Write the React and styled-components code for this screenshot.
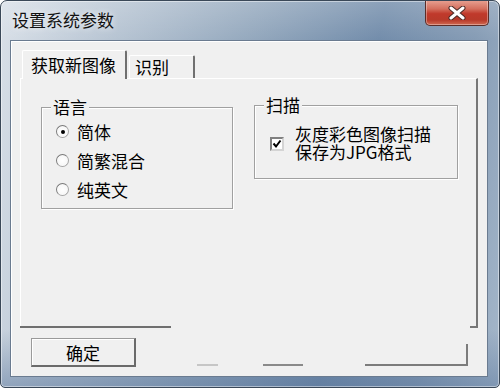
import React from 'react'
import styled, {createGlobalStyle} from 'styled-components'

const GlobalStyle = createGlobalStyle`
  html, body {
    margin: 0;
    padding: 0;
    background: #ffffff;
  }
  body {
    font-family: "Noto Sans CJK SC", "Liberation Sans", sans-serif;
    color: #000;
  }
`

const Window = styled.div`
  width: 500px;
  height: 388px;
  box-sizing: border-box;
  display: flex;
  flex-direction: column;
  border: 1px solid #3a4858;
  border-radius: 7px 7px 5px 5px;
  background:
    linear-gradient(180deg, rgba(255, 255, 255, 0.18) 0%, rgba(255, 255, 255, 0) 10%, rgba(80, 110, 150, 0) 85%, rgba(80, 110, 150, 0.45) 100%),
    linear-gradient(100deg, #d9e0e8 0%, #b9c6d4 20%, #95a9be 45%, #738dab 68%, #869cb5 85%, #a6b8cb 100%);
  box-shadow: inset 0 0 0 1px rgba(255, 255, 255, 0.45);
  overflow: hidden;
`

const TitleBar = styled.div`
  height: 39px;
  display: flex;
  justify-content: space-between;
  align-items: flex-start;
  flex-shrink: 0;
`

const Title = styled.div`
  margin: 9px 0 0 11px;
  font-size: 17px;
  line-height: 20px;
  color: #111;
  text-shadow: 0 0 6px rgba(255, 255, 255, 0.9);
`

const CloseButton = styled.div`
  width: 64px;
  height: 26px;
  margin: -1px 10px 0 0;
  box-sizing: border-box;
  display: flex;
  align-items: center;
  justify-content: center;
  border: 1px solid #5b2d28;
  border-top: none;
  border-radius: 0 0 5px 5px;
  background: linear-gradient(180deg, #e8a394 0%, #d4705f 35%, #c0392b 55%, #b83a2a 80%, #d06a52 100%);
  box-shadow: inset 0 0 0 1px rgba(255, 255, 255, 0.35);
`

const Client = styled.div`
  flex: 1;
  margin: 0 11px 10px 9px;
  box-sizing: border-box;
  border: 1px solid #6a7b90;
  background: #f0f0f0;
  box-shadow: inset 1px 1px 0 #ffffff;
  padding: 9px 9px 0 9px;
  display: flex;
  flex-direction: column;
`

const TabStrip = styled.div`
  height: 28px;
  display: flex;
  align-items: flex-end;
  padding-left: 2px;
  position: relative;
  z-index: 1;
`

const Tab = styled.div`
  box-sizing: border-box;
  height: ${p => (p.$active ? '29px' : '23px')};
  margin-bottom: ${p => (p.$active ? '-1px' : '0')};
  padding: ${p => (p.$active ? '3px 9px 0 8px' : '0 24px 0 5px')};
  margin-left: ${p => (p.$active ? '0' : '2px')};
  font-size: 17px;
  line-height: 22px;
  background: #f0f0f0;
  border-top: 1px solid #ffffff;
  border-left: 1px solid #ffffff;
  border-right: 2px solid #707070;
  border-radius: 2px 2px 0 0;
`

const Panel = styled.div`
  position: relative;
  height: 250px;
  box-sizing: border-box;
  border-top: 1px solid #ffffff;
  border-left: 1px solid #ffffff;
  border-right: 2px solid #777777;
  display: flex;
  align-items: flex-start;
  gap: 21px;
  padding: 26px 0 0 20px;

  &::after {
    content: '';
    position: absolute;
    left: -1px;
    right: -2px;
    bottom: 0;
    height: 2px;
    background: linear-gradient(
      90deg,
      #6f6f6f 0,
      #6f6f6f 151px,
      transparent 151px,
      transparent 450px,
      #777777 450px
    );
  }
`

const GroupBox = styled.div`
  position: relative;
  box-sizing: border-box;
  width: ${p => p.$width}px;
  height: ${p => p.$height}px;
  margin-top: ${p => p.$top || 0}px;
  border: 1px solid #a0a0a0;
  box-shadow: inset 1px 1px 0 #ffffff, 1px 1px 0 #ffffff;
  padding: ${p => p.$pad};
`

const GroupTitle = styled.div`
  position: absolute;
  top: -11px;
  left: 9px;
  padding: 0 2px;
  font-size: 17px;
  line-height: 20px;
  background: #f0f0f0;
`

const RadioRow = styled.label`
  height: 29px;
  display: flex;
  align-items: center;
  gap: 8px;
  font-size: 17px;
  line-height: 20px;
`

const RadioDot = styled.span`
  width: 13px;
  height: 13px;
  box-sizing: border-box;
  border-radius: 50%;
  border: 1px solid #a5a5a5;
  border-top-color: #7a7a7a;
  border-left-color: #7a7a7a;
  background: radial-gradient(circle, #ffffff 0%, #f4f4f4 100%);
  display: flex;
  align-items: center;
  justify-content: center;
  flex-shrink: 0;

  &::after {
    content: '';
    width: 4px;
    height: 4px;
    border-radius: 50%;
    background: ${p => (p.$checked ? '#000' : 'transparent')};
  }
`

const CheckRow = styled.label`
  display: flex;
  align-items: center;
  gap: 11px;
  font-size: 17px;
  line-height: 18px;
`

const CheckBox = styled.span`
  width: 14px;
  height: 14px;
  box-sizing: border-box;
  border: 2px solid #808080;
  border-right-color: #d4d4d4;
  border-bottom-color: #d4d4d4;
  background: #ffffff;
  display: flex;
  align-items: center;
  justify-content: center;
  flex-shrink: 0;
  margin-top: 2px;
`

const Footer = styled.div`
  display: flex;
  align-items: flex-end;
  margin-top: 10px;
  padding-left: 11px;
  height: 29px;
`

const Button = styled.div`
  width: 105px;
  height: 29px;
  box-sizing: border-box;
  display: flex;
  align-items: center;
  justify-content: center;
  font-size: 17px;
  background: #f0f0f0;
  border: 1px solid #9a9a9a;
  border-right: 2px solid #6a6a6a;
  border-bottom: 2px solid #6a6a6a;
  box-shadow: inset 1px 1px 0 #ffffff;
`

const Ghost = styled.div`
  width: ${p => p.$width}px;
  height: ${p => p.$height || 2}px;
  margin-left: ${p => p.$gap}px;
  margin-bottom: 1px;
  box-sizing: border-box;
  border-bottom: 2px solid ${p => p.$color};
  border-right: ${p => (p.$edge ? `2px solid ${p.$color}` : 'none')};
`

const CloseIcon = () => (
  <svg width="18" height="14" viewBox="0 0 18 14">
    <path
      d="M3 2 L15 12 M15 2 L3 12"
      stroke="#4a2a26"
      strokeWidth="5"
      strokeLinecap="round"
    />
    <path
      d="M3 2 L15 12 M15 2 L3 12"
      stroke="#ffffff"
      strokeWidth="3"
      strokeLinecap="round"
    />
  </svg>
)

const CheckMark = () => (
  <svg width="10" height="10" viewBox="0 0 10 10">
    <path d="M1.5 4.5 L4 7.5 L8.5 1.5" stroke="#000" strokeWidth="2" fill="none" />
  </svg>
)

const languages = [
  {label: '简体', checked: true},
  {label: '简繁混合', checked: false},
  {label: '纯英文', checked: false},
]

const App = () => (
  <>
    <GlobalStyle />
    <Window>
      <TitleBar>
        <Title>设置系统参数</Title>
        <CloseButton>
          <CloseIcon />
        </CloseButton>
      </TitleBar>
      <Client>
        <TabStrip>
          <Tab $active>获取新图像</Tab>
          <Tab>识别</Tab>
        </TabStrip>
        <Panel>
          <GroupBox $width={192} $height={102} $top={2} $pad="9px 0 0 14px">
            <GroupTitle>语言</GroupTitle>
            {languages.map(item => (
              <RadioRow key={item.label}>
                <RadioDot $checked={item.checked} />
                {item.label}
              </RadioRow>
            ))}
          </GroupBox>
          <GroupBox $width={204} $height={74} $pad="19px 0 0 15px">
            <GroupTitle>扫描</GroupTitle>
            <CheckRow>
              <CheckBox>
                <CheckMark />
              </CheckBox>
              <span>
                灰度彩色图像扫描
                <br />
                保存为JPG格式
              </span>
            </CheckRow>
          </GroupBox>
        </Panel>
        <Footer>
          <Button>确定</Button>
          <Ghost $width={21} $gap={61} $color="#c6c6c6" />
          <Ghost $width={40} $gap={45} $color="#8a8a8a" />
          <Ghost $width={103} $height={22} $gap={62} $color="#7c7c7c" $edge />
        </Footer>
      </Client>
    </Window>
  </>
)

export default App
